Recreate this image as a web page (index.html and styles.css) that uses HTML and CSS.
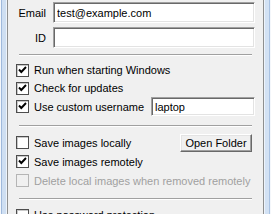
FILE: index.html
```html
<!DOCTYPE html>
<html lang="en">

<head>
	<meta charset="utf-8">
	<title>Settings</title>
	<link rel="stylesheet" href="styles.css">
</head>

<body>
	<div class="window">
		<div class="frame frame-left"></div>
		<main class="panel">
			<div class="fields">
				<label class="field-label" for="email">Email</label>
				<input class="textbox" id="email" type="text" value="test@example.com">
				<label class="field-label" for="uid">ID</label>
				<input class="textbox" id="uid" type="text" value="">
			</div>

			<hr class="sep">

			<ul class="options">
				<li class="option">
					<span class="check is-on"></span>
					Run when starting Windows
				</li>
				<li class="option">
					<span class="check is-on"></span>
					Check for updates
				</li>
				<li class="option">
					<span class="check is-on"></span>
					<span class="option-text">Use custom username</span>
					<input class="textbox textbox-short" type="text" value="laptop">
				</li>
			</ul>

			<hr class="sep sep-2">

			<ul class="options options-wide">
				<li class="option">
					<span class="check"></span>
					<span class="option-text">Save images locally</span>
					<button class="btn" type="button">Open Folder</button>
				</li>
				<li class="option">
					<span class="check is-on"></span>
					Save images remotely
				</li>
				<li class="option is-disabled">
					<span class="check"></span>
					Delete local images when removed remotely
				</li>
			</ul>

			<hr class="sep sep-3">

			<ul class="options">
				<li class="option">
					<span class="check"></span>
					Use password protection
				</li>
			</ul>
		</main>
		<div class="frame frame-right"></div>
	</div>
</body>

</html>
```

FILE: styles.css
```css
*,
*::before,
*::after {
	box-sizing: border-box;
}

:root {
	--face: #f0f0f0;
	--shadow: #a0a0a0;
	--dark: #696969;
	--light: #e3e3e3;
}

body {
	margin: 0;
	font-family: "Liberation Sans", Arial, sans-serif;
	font-size: 11px;
	color: #000;
	overflow: hidden;
}

.window {
	display: flex;
	height: 214px;
}

.frame {
	width: 8px;
	flex-shrink: 0;
}

.frame-left {
	background: linear-gradient(to right,
			#f4f7fb 0 1px,
			#9fb9dc 1px 2px,
			#cfdff2 2px 6px,
			#eef4fb 6px 7px,
			#8e8f8f 7px 8px);
}

.frame-right {
	background: linear-gradient(to right,
			#8e8f8f 0 1px,
			#eef4fb 1px 2px,
			#d3e2f4 2px 6px,
			#a9c2e2 6px 7px,
			#f4f7fb 7px 8px);
}

.panel {
	flex-grow: 1;
	background-color: var(--face);
	padding-top: 2px;
}

.fields {
	display: grid;
	grid-template-columns: 38px 1fr;
	column-gap: 7px;
	row-gap: 4px;
	align-items: center;
	padding-right: 8px;
}

.field-label {
	text-align: right;
}

.textbox {
	height: 21px;
	margin: 0;
	padding: 0 3px;
	font: inherit;
	color: #000;
	background-color: #fff;
	border: 1px solid;
	border-color: var(--shadow) #fff #fff var(--shadow);
	box-shadow: inset 1px 1px 0 var(--dark), inset -1px -1px 0 var(--light);
	outline: none;
}

.textbox-short {
	width: 104px;
	height: 19px;
	margin-left: auto;
	margin-right: 8px;
}

.sep {
	height: 0;
	margin: 6px 11px 5px;
	border: none;
	border-top: 1px solid var(--shadow);
	border-bottom: 1px solid #fff;
}

.sep-2 {
	margin-top: 9px;
	margin-bottom: 6px;
}

.sep-3 {
	margin-top: 8px;
	margin-bottom: 6px;
}

.options {
	margin: 0;
	padding: 0 0 0 8px;
	list-style-type: none;
}

.option {
	display: flex;
	align-items: center;
	gap: 5px;
	min-height: 18px;
}

.options-wide .option {
	min-height: 19px;
}

.option.is-disabled {
	color: #a0a0a0;
}

.check {
	width: 13px;
	height: 13px;
	flex-shrink: 0;
	background-color: #fff;
	border: 1px solid #4d4d4d;
	box-shadow: inset 1px 1px 0 #c9c9c9;

	&.is-on {
		background: #fff url("data:image/svg+xml,%3Csvg xmlns='http://www.w3.org/2000/svg' width='11' height='11'%3E%3Cpath d='M2 4.5 4.3 7 9 2' fill='none' stroke='%23000' stroke-width='1.9'/%3E%3C/svg%3E") no-repeat center;
	}

	.is-disabled & {
		background-color: var(--face);
		border-color: #b5b5b5;
		box-shadow: none;
	}
}

.btn {
	width: 72px;
	height: 18px;
	margin: 0 11px 0 auto;
	padding: 0;
	font: inherit;
	color: #000;
	background-color: var(--face);
	border: 1px solid;
	border-color: #fff var(--dark) var(--dark) #fff;
	box-shadow: inset -1px -1px 0 var(--shadow), inset 1px 1px 0 var(--light);
}
```
